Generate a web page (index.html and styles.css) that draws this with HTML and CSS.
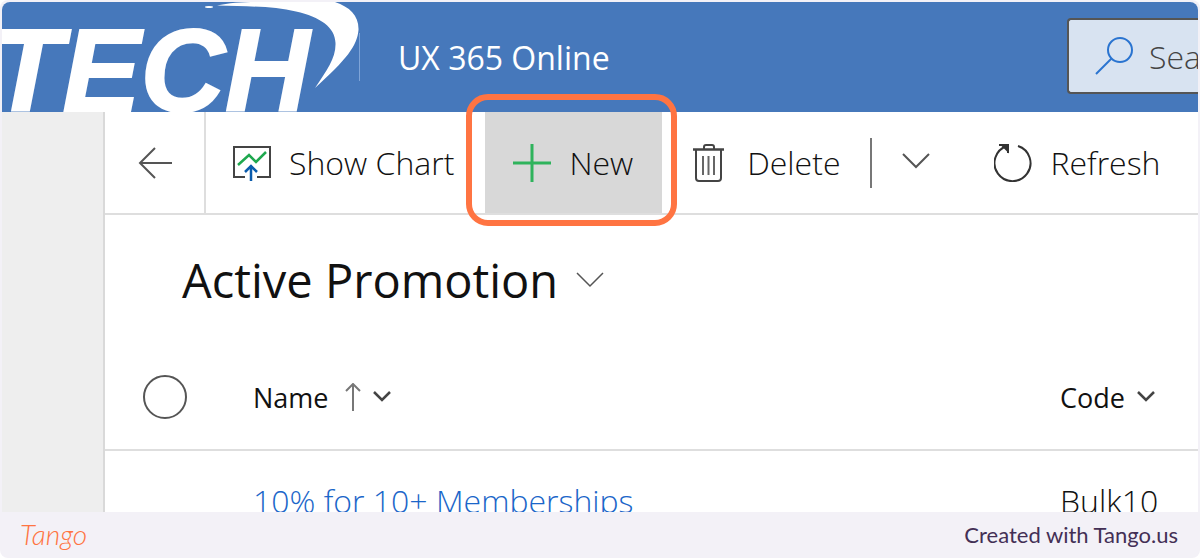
FILE: index.html
```html
<!DOCTYPE html>
<html lang="en">
<head>
<meta charset="utf-8">
<meta name="viewport" content="width=device-width, initial-scale=1">
<title>Active Promotion</title>
<link rel="stylesheet" href="styles.css">
</head>
<body>
<div class="page">
  <div class="frame">
    <header class="topbar">
      <svg class="logo" width="357" height="112" viewBox="0 0 357 112" role="img" aria-label="Tech">
        <text class="logo-text" x="-11" y="109">TECH</text>
        <path class="logo-swoosh" d="M215 3.500C226 1 240 0 254 0H333C348 5 357 14 356.500 28C355 44 345 57 313 86C325 68 334 56 333.500 41C333 25 318 15 294 9.500C272 4 246 4.500 215 3.500Z"/>
        <ellipse class="logo-swoosh" cx="207" cy="5" rx="4" ry="1"/>
      </svg>
      <span class="topbar-rule"></span>
      <span class="app-name">UX 365 Online</span>
      <label class="search">
        <svg width="42" height="42" viewBox="0 0 42 42" fill="none" stroke="#2a74d0" stroke-width="2"><circle cx="27" cy="15" r="12"/><path d="M18.500 23.500L3 39"/></svg>
        <input type="text" placeholder="Search" aria-label="Search">
      </label>
    </header>
    <div class="body">
      <nav class="rail" aria-label="Site map"></nav>
      <main class="main">
        <div class="commands">
          <button class="cmd back" aria-label="Back">
            <svg width="36" height="32" viewBox="0 0 36 32" fill="none" stroke="#555" stroke-width="2"><path d="M35 16H3M18 1L3 16L18 31"/></svg>
          </button>
          <button class="cmd chart">
            <svg width="38" height="38" viewBox="0 0 38 38" fill="none" stroke-width="2"><path stroke="#444" d="M12 33H1V3H37V33H24"/><path stroke="#1fa84f" d="M5 21L16 11L23 18L33 8" stroke-width="2.500"/><path stroke="#0b5cad" stroke-width="2.500" d="M18 37V23M12 28L18 22L24 28"/></svg>
            <span>Show Chart</span>
          </button>
          <button class="cmd new">
            <svg width="38" height="38" viewBox="0 0 38 38" fill="none" stroke="#2fb35c" stroke-width="3"><path d="M0 19H38M19 0V38"/></svg>
            <span>New</span>
          </button>
          <button class="cmd delete">
            <svg width="32" height="38" viewBox="0 0 32 38" fill="none" stroke="#444" stroke-width="2"><path stroke-width="2.500" d="M0 5.500H31"/><path d="M11 5V3Q11 1 13 1H19Q21 1 21 3V5M3 6V34Q3 37 6 37H25Q28 37 28 34V6"/><path stroke="#666" d="M10 12V31M15.500 12V31M21 12V31"/></svg>
            <span>Delete</span>
          </button>
          <span class="divider"></span>
          <button class="cmd more" aria-label="More delete options">
            <svg width="28" height="16" viewBox="0 0 28 16" fill="none" stroke="#555" stroke-width="2"><path d="M1 1L14 14L27 1"/></svg>
          </button>
          <button class="cmd refresh">
            <svg width="38" height="38" viewBox="0 0 38 38" fill="none" stroke="#333" stroke-width="2"><path d="M24 2A18 18 0 1 1 13 2M5 1H14V9"/><path fill="#333" d="M8 1H14V7Z"/></svg>
            <span>Refresh</span>
          </button>
        </div>
        <h1 class="view"><button class="view-button">Active Promotion
          <svg width="28" height="16" viewBox="0 0 28 16" fill="none" stroke="#555" stroke-width="1.500"><path d="M1 1L14 14L27 1"/></svg></button></h1>
        <table class="grid">
          <thead>
            <tr>
              <th class="pick"><input type="radio" aria-label="Select all rows"></th>
              <th class="name"><button class="sort">Name
                <svg class="ascending" width="16" height="28" viewBox="0 0 16 28" fill="none" stroke="#777" stroke-width="2"><path d="M8 28V2M1 8L8 1L15 8"/></svg>
                <svg width="18" height="12" viewBox="0 0 18 12" fill="none" stroke="#444" stroke-width="2.500"><path d="M1 1L9 9L17 1"/></svg></button></th>
              <th><button class="sort">Code
                <svg width="18" height="12" viewBox="0 0 18 12" fill="none" stroke="#444" stroke-width="2.500"><path d="M1 1L9 9L17 1"/></svg></button></th>
            </tr>
          </thead>
          <tbody>
            <tr><td></td><td><a href="#">10% for 10+ Memberships</a></td><td>Bulk10</td></tr>
          </tbody>
        </table>
      </main>
    </div>
  </div>
  <footer class="footer">
    <span class="tango">Tango</span>
    <span>Created with Tango.us</span>
  </footer>
</div>
</body>
</html>
```
FILE: styles.css
```css
* { box-sizing: border-box; }
body { margin: 0; background: #fff; font-family: "Open Sans", "Noto Sans", sans-serif; color: #111; }
button { font: inherit; color: inherit; background: none; border: 0; padding: 0; }
svg { display: block; flex: none; }
.page { height: 100vh; display: flex; flex-direction: column; background: #f3f1f7; border-radius: 8px; overflow: hidden; }
.frame { flex: 1; min-height: 0; margin: 2px 2px 0; border-radius: 8px 8px 0 0; overflow: hidden; display: flex; flex-direction: column; background: #fff; }
.topbar { flex: none; height: 110px; display: flex; align-items: center; background: #4678bb; }
.logo { align-self: flex-start; }
.logo-text { font: italic bold 117px "Liberation Sans", sans-serif; fill: #fff; stroke: #fff; stroke-width: 2px; }
.logo-swoosh { fill: #fff; }
.topbar-rule { width: 1px; height: 48px; background: #7ea4d8; }
.app-name { margin-left: 38px; font-size: 32px; color: #fff; white-space: nowrap; }
.search { margin: 0 0 2px auto; width: 131px; height: 76px; display: flex; align-items: center; gap: 14px; padding-left: 24px; background: #d8e3f1; border: 2px solid #555; border-right: 0; border-radius: 4px 0 0 4px; overflow: hidden; }
.search input { flex: 1; min-width: 0; border: 0; padding: 0; background: none; font: 300 32px "Open Sans", sans-serif; }
.search input::placeholder { color: #444; opacity: 1; }
.body { flex: 1; min-height: 0; display: flex; }
.rail { width: 103px; flex: none; background: #eee; border-right: 2px solid #d9d9d9; }
.main { flex: 1; min-width: 0; }
.commands { height: 103px; display: flex; align-items: stretch; border-bottom: 2px solid #dedede; font-size: 32px; font-weight: 300; white-space: nowrap; }
.cmd { display: flex; align-items: center; gap: 18px; }
.back { width: 101px; justify-content: center; border-right: 2px solid #dedede; }
.chart { padding: 0 31px 0 27px; }
.new { position: relative; padding: 0 29px 0 28px; background: #d8d8d8; }
.new::after { content: ""; position: absolute; inset: -18px -15px -13px -19px; border: 6px solid #ff7442; border-radius: 22px; }
.delete { padding: 0 30px 0 31px; gap: 22px; }
.divider { align-self: center; width: 2px; height: 50px; background: #777; }
.more { padding: 0 64px 4px 30px; }
.view { margin: 0; padding: 31px 0 0 77px; font-size: 47px; font-weight: 400; line-height: 68px; }
.view-button { display: flex; align-items: center; gap: 18px; }
.grid { width: 100%; border-collapse: collapse; table-layout: fixed; margin-top: 33px; }
.grid th { height: 103px; padding: 0 0 2px; text-align: left; font-size: 27px; font-weight: 400; border-bottom: 2px solid #dedede; }
.grid td { padding: 28px 0 0; font-size: 32px; font-weight: 300; line-height: 44px; white-space: nowrap; }
.grid a { color: #1b66c9; text-decoration: none; }
.pick { width: 148px; }
.name { width: 807px; }
.pick input { appearance: none; display: block; width: 44px; height: 44px; margin: 0 0 0 38px; border: 2px solid #555; border-radius: 50%; }
.sort { display: flex; align-items: center; gap: 12px; }
.ascending { margin-left: 4px; }
.footer { flex: none; height: 46px; display: flex; align-items: center; justify-content: space-between; padding: 0 22px 2px 20px; font: 22px Lato, sans-serif; color: #432f55; }
.tango { font: italic 300 28px Lato, cursive; color: #ff7442; }
```
